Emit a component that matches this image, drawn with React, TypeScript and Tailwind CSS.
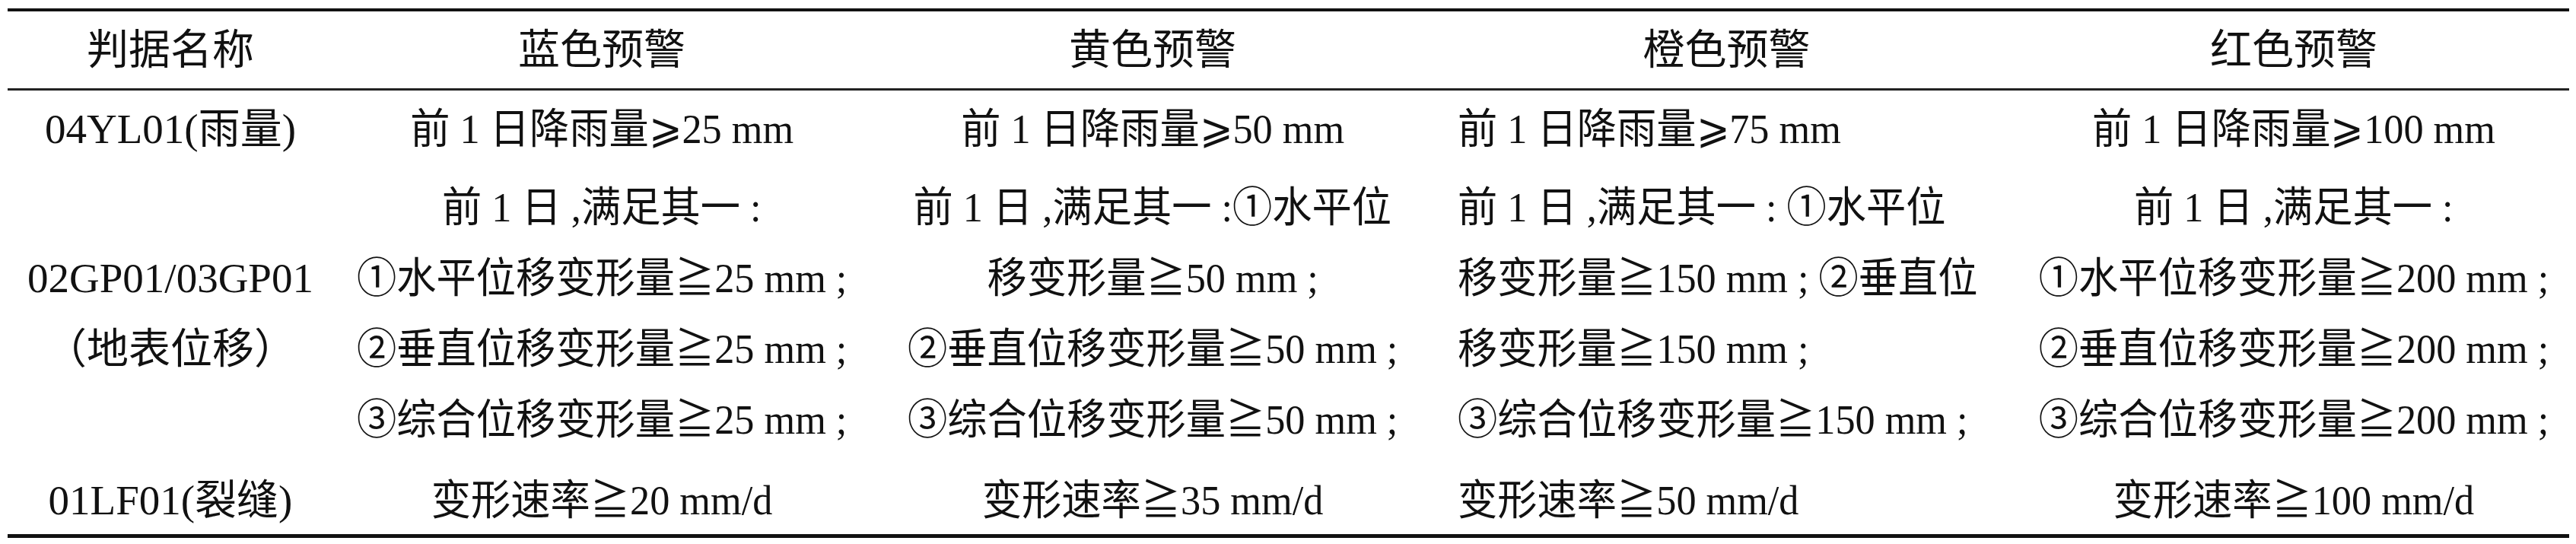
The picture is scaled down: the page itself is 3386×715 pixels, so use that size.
type Cell = { lines: string[]; left?: boolean };

const header = ["判据名称", "蓝色预警", "黄色预警", "橙色预警", "红色预警"];

const rainRow: Cell[] = [
  { lines: ["04YL01(雨量)"] },
  { lines: ["前 1 日降雨量⩾25 mm"] },
  { lines: ["前 1 日降雨量⩾50 mm"] },
  { lines: ["前 1 日降雨量⩾75 mm"], left: true },
  { lines: ["前 1 日降雨量⩾100 mm"] },
];

const gpsRow: Cell[] = [
  { lines: ["02GP01/03GP01", "（地表位移）"] },
  {
    lines: [
      "前 1 日 ,满足其一 :",
      "①水平位移变形量≧25 mm ;",
      "②垂直位移变形量≧25 mm ;",
      "③综合位移变形量≧25 mm ;",
    ],
  },
  {
    lines: [
      "前 1 日 ,满足其一 :①水平位",
      "移变形量≧50 mm ;",
      "②垂直位移变形量≧50 mm ;",
      "③综合位移变形量≧50 mm ;",
    ],
  },
  {
    lines: [
      "前 1 日 ,满足其一 : ①水平位",
      "移变形量≧150 mm ; ②垂直位",
      "移变形量≧150 mm ;",
      "③综合位移变形量≧150 mm ;",
    ],
    left: true,
  },
  {
    lines: [
      "前 1 日 ,满足其一 :",
      "①水平位移变形量≧200 mm ;",
      "②垂直位移变形量≧200 mm ;",
      "③综合位移变形量≧200 mm ;",
    ],
  },
];

const crackRow: Cell[] = [
  { lines: ["01LF01(裂缝)"] },
  { lines: ["变形速率≧20 mm/d"] },
  { lines: ["变形速率≧35 mm/d"] },
  { lines: ["变形速率≧50 mm/d"], left: true },
  { lines: ["变形速率≧100 mm/d"] },
];

const cols = "grid grid-cols-[428px_706px_742px_767px_724px]";

function Row({ cells, className }: { cells: Cell[]; className: string }) {
  return (
    <div className={`${cols} ${className}`}>
      {cells.map((cell, i) => (
        <div
          key={i}
          className={`flex flex-col justify-center ${cell.left ? "items-start pl-[30px]" : "items-center"}`}
        >
          {cell.lines.map((line) => (
            <div
              key={line}
              // the printed table is set a little narrower than the plain fonts
              className={`whitespace-pre leading-[93px] ${i === 0 ? "" : "scale-x-[0.95]"} ${cell.left ? "origin-left" : ""}`}
            >
              {line}
            </div>
          ))}
        </div>
      ))}
    </div>
  );
}

export default function App() {
  return (
    <div className="h-[715px] w-[3386px] bg-white pt-[11px] text-[55px] text-[#111] font-['Liberation_Serif','Noto_Sans_CJK_SC',serif]">
      <div className="mx-[10px] w-[3367px] border-y-4 border-b-[5px] border-[#111]">
        <div className={`${cols} h-[104px] border-b-[3px] border-[#222]`}>
          {header.map((h) => (
            <div key={h} className="flex items-center justify-center leading-none">
              {h}
            </div>
          ))}
        </div>
        <Row cells={rainRow} className="h-[100px]" />
        <Row cells={gpsRow} className="h-[386px]" />
        <Row cells={crackRow} className="h-[97px] pt-[6px]" />
      </div>
    </div>
  );
}
